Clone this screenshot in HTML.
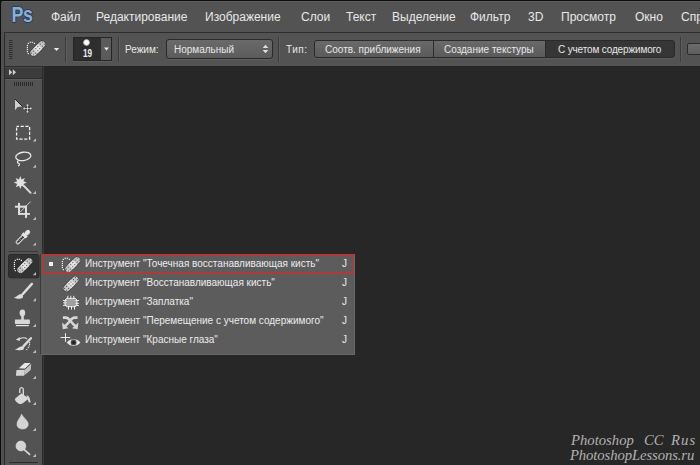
<!DOCTYPE html>
<html><head><meta charset="utf-8">
<style>
*{margin:0;padding:0;box-sizing:border-box}
html,body{width:700px;height:465px;overflow:hidden;background:#272727;font-family:"Liberation Sans",sans-serif;position:relative}
.a{position:absolute}
.t{position:absolute;white-space:pre;line-height:1;color:#e6e6e6}
#frameL{left:0;top:0;width:1px;height:465px;background:#0c0c0c}
#frameT{left:0;top:0;width:700px;height:1px;background:#0c0c0c}
#menubar{left:1px;top:1px;width:699px;height:31px;background:#535353;border-top-left-radius:3px;border-top:1px solid #5f5f5f}
#lstrip{left:1px;top:32px;width:3px;height:433px;background:#505050}
#lline{left:4px;top:32px;width:1px;height:433px;background:#2b2b2b}
#optbar{left:5px;top:33px;width:695px;height:33px;background:#535353}
#optTop{left:4px;top:32px;width:696px;height:1px;background:#2d2d2d}
#optBot{left:4px;top:65px;width:696px;height:1px;background:#2d2d2d}
.mb{font-size:12px;color:#e8e8e8;top:11px}
.ob{font-size:10px;color:#e8e8e8}
.sep{position:absolute;top:37px;width:1px;height:25px;background:#3a3a3a;box-shadow:1px 0 0 #5e5e5e}
#tools{left:5px;top:66px;width:37px;height:399px;background:#535353}
#toolsR{left:42px;top:66px;width:2px;height:399px;background:#3a3a3a;border-left:1px solid #2c2c2c}
#thead{left:5px;top:66px;width:37px;height:13px;background:#3c3c3c;border-bottom:1px solid #2c2c2c;border-top:1px solid #2c2c2c;box-shadow:inset 0 1px 0 #474747,0 1px 0 #5e5e5e}
#menu{left:40px;top:254px;width:315px;height:101px;border-left:1px solid #3a3a3a;background:#5c5c5c;border-right:1px solid #666;border-bottom:1px solid #666}
.mi{font-size:10px;color:#ececec;left:85px}
.mj{font-size:10px;color:#ececec;left:342px}
#brushbox{left:73px;top:37px;width:39px;height:24px;background:#2e2e2e;border:1px solid #262626;box-shadow:0 1px 0 #5e5e5e}
#brushdd{left:101px;top:38px;width:10px;height:22px;background:#5b5b5b}
#dd{left:166px;top:39px;width:107px;height:20px;border:1px solid #2a2a2a;border-radius:3px;background:linear-gradient(#6a6a6a,#5c5c5c);box-shadow:0 1px 0 #5e5e5e}
#seg{left:314px;top:40px;width:361px;height:18px;border:1px solid #2a2a2a;border-radius:3px;background:#2a2a2a;overflow:hidden;box-shadow:0 1px 0 #5e5e5e}
.sb{position:absolute;top:0;height:16px;background:linear-gradient(#6a6a6a,#5a5a5a)}
#chk{left:687px;top:43px;width:16px;height:12px;border:1px solid #2c2c2c;border-radius:2px;background:linear-gradient(#6c6c6c,#5e5e5e)}
.wm{font-family:"Liberation Serif",serif;font-style:italic;font-size:14px;color:#b2b2b2;transform-origin:0 0;transform:scaleX(1.05)}
</style></head><body>
<div class="a" id="menubar"></div>
<div class="a" id="frameT"></div>
<div class="a" id="frameL"></div>
<div class="a" id="lstrip"></div>
<div class="a" id="lline"></div>
<div class="a" id="optbar"></div>
<div class="a" id="optTop"></div>
<div class="sep" style="left:65px"></div>
<div class="sep" style="left:118px"></div>
<div class="sep" style="left:278px"></div>
<div class="sep" style="left:680px"></div>
<div class="a" id="brushbox"></div>
<div class="a" id="brushdd"></div>
<div class="a" id="dd"></div>
<div class="a" id="seg"><div class="sb" style="left:0;width:118px"></div><div class="sb" style="left:119px;width:111px"></div><div class="sb" style="left:231px;width:130px;background:#363636"></div></div>
<div class="a" id="chk"></div>

<div class="a" id="tools"></div>
<div class="a" id="toolsR"></div>
<div class="a" id="thead"></div>

<div class="a" id="menu"></div>

<svg class="a" style="left:0;top:0" width="700" height="465" viewBox="0 0 700 465"><rect x="27.7" y="53.0" width="1.2" height="1.2" fill="#f0f0f0"/><rect x="26.799999999999997" y="51.0" width="1.2" height="1.2" fill="#f0f0f0"/><rect x="26.799999999999997" y="48.9" width="1.2" height="1.2" fill="#f0f0f0"/><rect x="26.799999999999997" y="46.9" width="1.2" height="1.2" fill="#f0f0f0"/><rect x="26.799999999999997" y="44.9" width="1.2" height="1.2" fill="#f0f0f0"/><rect x="27.7" y="42.8" width="1.2" height="1.2" fill="#f0f0f0"/><rect x="29.7" y="41.699999999999996" width="1.2" height="1.2" fill="#f0f0f0"/><rect x="31.699999999999996" y="41.699999999999996" width="1.2" height="1.2" fill="#f0f0f0"/><rect x="33.8" y="42.8" width="1.2" height="1.2" fill="#f0f0f0"/><g transform="translate(37.8,48.6) rotate(-45)"><rect x="-9.75" y="-3.7" width="19.5" height="7.4" rx="3.7" fill="#262626" opacity=".8"/><rect x="-9.25" y="-3.2" width="18.5" height="6.4" rx="3.2" fill="#c6c6c6"/><rect x="-3.1" y="-3.2" width="6.2" height="6.4" fill="#e6e6e6"/><circle cx="-7.699999999999999" cy="-1.4" r="0.55" fill="#484848"/><circle cx="-4.9" cy="-1.4" r="0.55" fill="#484848"/><circle cx="-7.699999999999999" cy="1.4" r="0.55" fill="#484848"/><circle cx="-4.9" cy="1.4" r="0.55" fill="#484848"/><circle cx="-1.4" cy="-1.4" r="0.55" fill="#484848"/><circle cx="1.4" cy="-1.4" r="0.55" fill="#484848"/><circle cx="-1.4" cy="1.4" r="0.55" fill="#484848"/><circle cx="1.4" cy="1.4" r="0.55" fill="#484848"/><circle cx="4.9" cy="-1.4" r="0.55" fill="#484848"/><circle cx="7.699999999999999" cy="-1.4" r="0.55" fill="#484848"/><circle cx="4.9" cy="1.4" r="0.55" fill="#484848"/><circle cx="7.699999999999999" cy="1.4" r="0.55" fill="#484848"/></g><path d="M53.8 48 L59.2 48 L56.5 51Z" fill="#ececec"/><rect x="9" y="40" width="3.5" height="1" fill="#2e2e2e"/><rect x="9" y="42" width="3.5" height="1" fill="#2e2e2e"/><rect x="9" y="44" width="3.5" height="1" fill="#2e2e2e"/><rect x="9" y="46" width="3.5" height="1" fill="#2e2e2e"/><rect x="9" y="48" width="3.5" height="1" fill="#2e2e2e"/><rect x="9" y="50" width="3.5" height="1" fill="#2e2e2e"/><rect x="9" y="52" width="3.5" height="1" fill="#2e2e2e"/><rect x="9" y="54" width="3.5" height="1" fill="#2e2e2e"/><rect x="9" y="56" width="3.5" height="1" fill="#2e2e2e"/><rect x="9" y="58" width="3.5" height="1" fill="#2e2e2e"/><path d="M9 69.2 L12.2 72.2 L9 75.2Z M12.8 69.2 L16 72.2 L12.8 75.2Z" fill="#cfcfcf"/><rect x="14" y="82" width="1" height="4" fill="#2a2a2a"/><rect x="16" y="82" width="1" height="4" fill="#2a2a2a"/><rect x="18" y="82" width="1" height="4" fill="#2a2a2a"/><rect x="20" y="82" width="1" height="4" fill="#2a2a2a"/><rect x="22" y="82" width="1" height="4" fill="#2a2a2a"/><rect x="24" y="82" width="1" height="4" fill="#2a2a2a"/><rect x="26" y="82" width="1" height="4" fill="#2a2a2a"/><rect x="28" y="82" width="1" height="4" fill="#2a2a2a"/><rect x="30" y="82" width="1" height="4" fill="#2a2a2a"/><rect x="32" y="82" width="1" height="4" fill="#2a2a2a"/><path d="M15 99.4 L22.3 106.6 L17.6 106.9 L15 110.2Z" fill="#cfcfcf"/><path d="M15 99 L22.5 106.5" stroke="#1e1e1e" stroke-width="0.9" fill="none"/><g fill="#e6e6e6" stroke="#1f1f1f" stroke-width="0.4"><path d="M27.5 103.8 L29.4 105.8 L28.1 105.8 L28.1 107.9 L30.2 107.9 L30.2 106.6 L32.2 108.5 L30.2 110.4 L30.2 109.1 L28.1 109.1 L28.1 111.2 L29.4 111.2 L27.5 113.2 L25.6 111.2 L26.9 111.2 L26.9 109.1 L24.8 109.1 L24.8 110.4 L22.8 108.5 L24.8 106.6 L24.8 107.9 L26.9 107.9 L26.9 105.8 L25.6 105.8Z"/></g><rect x="16.6" y="126.4" width="13" height="12.8" fill="none" stroke="#f2f2f2" stroke-width="1.3" stroke-dasharray="3.2 1.6" stroke-dashoffset="0.8"/><path d="M36.0 138.3 L36.0 141.5 L32.8 141.5Z" fill="#bcbcbc"/><ellipse cx="23.3" cy="156.4" rx="7.6" ry="4.2" transform="rotate(-8 23.3 156.4)" fill="none" stroke="#e8e8e8" stroke-width="1.3"/><path d="M18.5 160.4 C16.5 161.8 17.5 163 19 163.5 C20 164 19.2 165.5 18 166" fill="none" stroke="#e8e8e8" stroke-width="1.2"/><path d="M36.0 164.5 L36.0 167.7 L32.8 167.7Z" fill="#bcbcbc"/><path d="M20.30 176.10 L21.60 179.46 L24.90 178.00 L23.44 181.30 L26.80 182.60 L23.44 183.90 L24.90 187.20 L21.60 185.74 L20.30 189.10 L19.00 185.74 L15.70 187.20 L17.16 183.90 L13.80 182.60 L17.16 181.30 L15.70 178.00 L19.00 179.46Z" fill="#e2e2e2"/><path d="M24 186 L30.6 192.8" stroke="#dcdcdc" stroke-width="1.9" stroke-linecap="round"/><path d="M36.0 190.7 L36.0 193.89999999999998 L32.8 193.89999999999998Z" fill="#bcbcbc"/><g fill="#dedede"><rect x="18" y="202.9" width="2" height="12"/><rect x="14.9" y="205.7" width="12.1" height="2"/><rect x="25" y="205.7" width="2" height="12.2"/><rect x="18" y="213" width="11.9" height="1.9"/></g><path d="M20.3 212 L30.6 201.6" stroke="#d8d8d8" stroke-width="0.9"/><path d="M36.0 216.8 L36.0 220.0 L32.8 220.0Z" fill="#bcbcbc"/><g transform="translate(23.5 236.5) rotate(-45)"><rect x="-9.5" y="-1.6" width="10" height="3.2" rx="1" fill="#303030" stroke="#e8e8e8" stroke-width="1"/><path d="M-8 -1 V1 M-6 -1 V1 M-4 -1 V1 M-2 -1 V1" stroke="#c8c8c8" stroke-width="0.7"/><rect x="0" y="-3" width="3" height="6" fill="#e4e4e4"/><rect x="2.5" y="-2.2" width="6" height="4.4" rx="2.2" fill="#e4e4e4"/></g><path d="M36.0 242.4 L36.0 245.6 L32.8 245.6Z" fill="#bcbcbc"/><rect x="8.5" y="251" width="29.5" height="1" fill="#383838"/><rect x="8.5" y="254.5" width="30.5" height="23.3" rx="2" fill="#323232" stroke="#2a2a2a" stroke-width="1"/><rect x="14.700000000000001" y="270.0" width="1.2" height="1.2" fill="#f0f0f0"/><rect x="13.8" y="268.0" width="1.2" height="1.2" fill="#f0f0f0"/><rect x="13.8" y="265.9" width="1.2" height="1.2" fill="#f0f0f0"/><rect x="13.8" y="263.9" width="1.2" height="1.2" fill="#f0f0f0"/><rect x="13.8" y="261.9" width="1.2" height="1.2" fill="#f0f0f0"/><rect x="14.700000000000001" y="259.79999999999995" width="1.2" height="1.2" fill="#f0f0f0"/><rect x="16.7" y="258.7" width="1.2" height="1.2" fill="#f0f0f0"/><rect x="18.7" y="258.7" width="1.2" height="1.2" fill="#f0f0f0"/><rect x="20.799999999999997" y="259.79999999999995" width="1.2" height="1.2" fill="#f0f0f0"/><g transform="translate(24.8,265.6) rotate(-45)"><rect x="-9.75" y="-3.7" width="19.5" height="7.4" rx="3.7" fill="#262626" opacity=".8"/><rect x="-9.25" y="-3.2" width="18.5" height="6.4" rx="3.2" fill="#c6c6c6"/><rect x="-3.1" y="-3.2" width="6.2" height="6.4" fill="#e6e6e6"/><circle cx="-7.699999999999999" cy="-1.4" r="0.55" fill="#484848"/><circle cx="-4.9" cy="-1.4" r="0.55" fill="#484848"/><circle cx="-7.699999999999999" cy="1.4" r="0.55" fill="#484848"/><circle cx="-4.9" cy="1.4" r="0.55" fill="#484848"/><circle cx="-1.4" cy="-1.4" r="0.55" fill="#484848"/><circle cx="1.4" cy="-1.4" r="0.55" fill="#484848"/><circle cx="-1.4" cy="1.4" r="0.55" fill="#484848"/><circle cx="1.4" cy="1.4" r="0.55" fill="#484848"/><circle cx="4.9" cy="-1.4" r="0.55" fill="#484848"/><circle cx="7.699999999999999" cy="-1.4" r="0.55" fill="#484848"/><circle cx="4.9" cy="1.4" r="0.55" fill="#484848"/><circle cx="7.699999999999999" cy="1.4" r="0.55" fill="#484848"/></g><path d="M36.0 272 L36.0 275.2 L32.8 275.2Z" fill="#bcbcbc"/><path d="M31.9 283.9 L22.6 294.2" stroke="#dedede" stroke-width="2.4" stroke-linecap="round"/><path d="M13.9 297.4 C17 297 18.5 294 21 294 C23 294.2 23.6 296.5 22.5 298 C20 299.3 16 298.6 13.9 297.4Z" fill="#dcdcdc"/><path d="M36.0 298 L36.0 301.2 L32.8 301.2Z" fill="#bcbcbc"/><ellipse cx="22.4" cy="313" rx="2.8" ry="3.4" fill="#dadada"/><rect x="21.2" y="314" width="2.6" height="6" fill="#d5d5d5"/><rect x="14.9" y="319.5" width="15" height="4.4" rx=".6" fill="#d8d8d8"/><rect x="15.9" y="324.9" width="12.9" height="1.3" fill="#e8e8e8"/><path d="M36.0 323.8 L36.0 327.0 L32.8 327.0Z" fill="#bcbcbc"/><path d="M15.9 339.8 L19.8 337 L19.8 340.9Z" fill="#dcdcdc"/><path d="M19.5 338.8 C22 337.5 25.5 337.2 27 339" fill="none" stroke="#dcdcdc" stroke-width="1.2"/><path d="M30.9 338.2 L23.4 346.4" stroke="#d8d8d8" stroke-width="2.4" stroke-linecap="round"/><path d="M14.9 349.3 C18 348.8 19.5 346.2 22 346.2 C24 346.4 24.5 348.5 23.5 349.6 C21 350.8 17 350.4 14.9 349.3Z" fill="#dcdcdc"/><rect x="29.05" y="342.05" width="1.1" height="1.1" fill="#f2f2f2"/><rect x="29.05" y="343.75" width="1.1" height="1.1" fill="#f2f2f2"/><rect x="28.55" y="345.45" width="1.1" height="1.1" fill="#f2f2f2"/><rect x="27.75" y="347.05" width="1.1" height="1.1" fill="#f2f2f2"/><rect x="26.25" y="349.05" width="1.1" height="1.1" fill="#f2f2f2"/><path d="M36.0 349.7 L36.0 352.9 L32.8 352.9Z" fill="#bcbcbc"/><path d="M18.3 368.8 L24.5 362.9 L31.2 362.9 L25 369.1Z" fill="#e6e6e6"/><path d="M16.5 369.9 L25 369.6 L24 375.8 L15.9 375.8Z" fill="#d4d4d4"/><path d="M25 369.4 L31.2 363.7 L30.7 370.1 L24 375.6Z" fill="#c2c2c2"/><path d="M18.3 368.8 L25 369.1 L31.2 362.9" stroke="#2e2e2e" stroke-width=".7" fill="none"/><path d="M36.0 375.8 L36.0 379.0 L32.8 379.0Z" fill="#bcbcbc"/><path d="M19.8 393 L19.8 389.5 C19.8 387 23.3 387 23.3 389.5 L23.3 395" fill="none" stroke="#e0e0e0" stroke-width="1.3"/><path d="M15.2 398.5 L21.5 393.2 L27.8 397.8 C28.2 398.3 28 399 27.6 399.4 L22.5 403.6 C21.5 404.2 20 404.2 18.8 403.7 C16.8 402.8 15.3 401 15 399.5Z" fill="#d8d8d8"/><path d="M26.5 395.3 C28.5 395.5 29.5 397 29.8 399 L30.7 402.3 L28.8 402.6 Z" fill="#dadada"/><path d="M36.0 401.7 L36.0 404.9 L32.8 404.9Z" fill="#bcbcbc"/><path d="M21.6 414.2 C22.5 417 28.2 420.5 28.2 424.3 C28.2 427.3 25.6 429 22.5 429 C19.4 429 17 427.3 17 424.3 C17 420.5 21 417 21.6 414.2Z" fill="#d4d4d4" stroke="#e8e8e8" stroke-width=".6"/><path d="M36.0 427.7 L36.0 430.9 L32.8 430.9Z" fill="#bcbcbc"/><circle cx="20.9" cy="446" r="4.9" fill="#d4d4d4" stroke="#e6e6e6" stroke-width=".6"/><path d="M24.5 449.8 L29.6 454.4" stroke="#dadada" stroke-width="1.6" stroke-linecap="round"/><path d="M36.0 453.7 L36.0 456.9 L32.8 456.9Z" fill="#bcbcbc"/><rect x="9" y="462" width="29" height="1" fill="#2e2e2e"/><rect x="49" y="262" width="4" height="4" fill="#f4f4f4"/><rect x="62.699999999999996" y="269.0" width="1.2" height="1.2" fill="#f0f0f0"/><rect x="61.8" y="267.0" width="1.2" height="1.2" fill="#f0f0f0"/><rect x="61.8" y="264.9" width="1.2" height="1.2" fill="#f0f0f0"/><rect x="61.8" y="262.9" width="1.2" height="1.2" fill="#f0f0f0"/><rect x="61.8" y="260.9" width="1.2" height="1.2" fill="#f0f0f0"/><rect x="62.699999999999996" y="258.79999999999995" width="1.2" height="1.2" fill="#f0f0f0"/><rect x="64.7" y="257.7" width="1.2" height="1.2" fill="#f0f0f0"/><rect x="66.7" y="257.7" width="1.2" height="1.2" fill="#f0f0f0"/><rect x="68.80000000000001" y="258.79999999999995" width="1.2" height="1.2" fill="#f0f0f0"/><g transform="translate(72.8,264.6) rotate(-45)"><rect x="-9.75" y="-3.7" width="19.5" height="7.4" rx="3.7" fill="#262626" opacity=".8"/><rect x="-9.25" y="-3.2" width="18.5" height="6.4" rx="3.2" fill="#c6c6c6"/><rect x="-3.1" y="-3.2" width="6.2" height="6.4" fill="#e6e6e6"/><circle cx="-7.699999999999999" cy="-1.4" r="0.55" fill="#484848"/><circle cx="-4.9" cy="-1.4" r="0.55" fill="#484848"/><circle cx="-7.699999999999999" cy="1.4" r="0.55" fill="#484848"/><circle cx="-4.9" cy="1.4" r="0.55" fill="#484848"/><circle cx="-1.4" cy="-1.4" r="0.55" fill="#484848"/><circle cx="1.4" cy="-1.4" r="0.55" fill="#484848"/><circle cx="-1.4" cy="1.4" r="0.55" fill="#484848"/><circle cx="1.4" cy="1.4" r="0.55" fill="#484848"/><circle cx="4.9" cy="-1.4" r="0.55" fill="#484848"/><circle cx="7.699999999999999" cy="-1.4" r="0.55" fill="#484848"/><circle cx="4.9" cy="1.4" r="0.55" fill="#484848"/><circle cx="7.699999999999999" cy="1.4" r="0.55" fill="#484848"/></g><g transform="translate(71,284) rotate(-45)"><rect x="-9.75" y="-3.7" width="19.5" height="7.4" rx="3.7" fill="#262626" opacity=".8"/><rect x="-9.25" y="-3.2" width="18.5" height="6.4" rx="3.2" fill="#c6c6c6"/><rect x="-3.1" y="-3.2" width="6.2" height="6.4" fill="#e6e6e6"/><circle cx="-7.699999999999999" cy="-1.4" r="0.55" fill="#484848"/><circle cx="-4.9" cy="-1.4" r="0.55" fill="#484848"/><circle cx="-7.699999999999999" cy="1.4" r="0.55" fill="#484848"/><circle cx="-4.9" cy="1.4" r="0.55" fill="#484848"/><circle cx="-1.4" cy="-1.4" r="0.55" fill="#484848"/><circle cx="1.4" cy="-1.4" r="0.55" fill="#484848"/><circle cx="-1.4" cy="1.4" r="0.55" fill="#484848"/><circle cx="1.4" cy="1.4" r="0.55" fill="#484848"/><circle cx="4.9" cy="-1.4" r="0.55" fill="#484848"/><circle cx="7.699999999999999" cy="-1.4" r="0.55" fill="#484848"/><circle cx="4.9" cy="1.4" r="0.55" fill="#484848"/><circle cx="7.699999999999999" cy="1.4" r="0.55" fill="#484848"/></g><ellipse cx="71" cy="302.6" rx="8.2" ry="6.2" fill="#2a2a2a" opacity=".45"/><g><path d="M66.5 298.3 L75.5 298.3 L77 300.3 L77 305 L75.5 306.8 L66.5 306.8 L65 305 L65 300.3Z" fill="#a0a0a0" stroke="#f0f0f0" stroke-width="1"/><g stroke="#f2f2f2" stroke-width="1"><path d="M67.8 295.8 V299 M70.8 295.8 V299 M73.8 295.8 V299"/><path d="M68.5 306 V309.6 M71.5 306 V309.6 M74.5 306 V309.6"/><path d="M63 300.5 H66.5 M63 302.8 H66.5 M63 305.3 H66.5"/><path d="M75.5 300.5 H79 M75.5 303.3 H79 M75.5 305.5 H79"/></g></g><g fill="none" stroke="#d6d6d6" stroke-width="2.6"><path d="M62.9 317.6 L65.8 317.6 C69.5 317.6 71 323 75.2 325.8"/><path d="M77.5 317.6 L74.6 317.6 C70.9 317.6 69.4 323 65.2 325.8"/></g><path d="M62 322.6 L68.4 328.2 L62.8 329.2Z M78.4 322.6 L72 328.2 L77.6 329.2Z" fill="#d6d6d6"/><path d="M60.7 337.5 H70.2 M65.5 333.2 V341.8" stroke="#ececec" stroke-width="1"/><path d="M66.8 342.6 C70 338.2 77.2 338.2 80.4 342.6 C77.2 347 70 347 66.8 342.6Z" fill="#e6e6e6"/><circle cx="73.6" cy="342.4" r="2.9" fill="#4a4a4a"/><circle cx="73.6" cy="342.4" r="1.5" fill="#1e1e1e"/></svg>

<div class="a" style="left:42px;top:254px;width:312px;height:20px;border:2px solid #ac3c3c"></div>

<!-- Ps logo -->
<svg class="a" style="left:0;top:0" width="40" height="30"><text x="0" y="0" transform="translate(11.4 21.8) scale(0.85 1.03)" font-family="Liberation Sans" font-weight="bold" font-size="21" fill="#88b0d8" stroke="#203850" stroke-width="1.6" paint-order="stroke" letter-spacing="-0.4">Ps</text></svg>
<!-- menubar -->
<div class="t mb" style="left:51px">Файл</div>
<div class="t mb" style="left:96px">Редактирование</div>
<div class="t mb" style="left:205px">Изображение</div>
<div class="t mb" style="left:301px">Слои</div>
<div class="t mb" style="left:346px">Текст</div>
<div class="t mb" style="left:392px">Выделение</div>
<div class="t mb" style="left:470px">Фильтр</div>
<div class="t mb" style="left:528px">3D</div>
<div class="t mb" style="left:561px">Просмотр</div>
<div class="t mb" style="left:635px">Окно</div>
<div class="t mb" style="left:681px">Справка</div>

<!-- options bar -->
<div class="t ob" style="left:125px;top:45px">Режим:</div>
<div class="t ob" style="left:174px;top:45px">Нормальный</div>
<div class="t ob" style="left:286px;top:45px;letter-spacing:0.5px">Тип:</div>
<div class="t ob" style="left:325px;top:45px">Соотв. приближения</div>
<div class="t ob" style="left:444px;top:45px">Создание текстуры</div>
<div class="t ob" style="left:558px;top:45px;letter-spacing:-0.15px">С учетом содержимого</div>
<div class="t" style="left:83px;top:49px;font-size:10px;font-weight:bold;color:#eeeeee;transform:scaleX(0.82);transform-origin:0 0">19</div>
<div class="a" style="left:83px;top:39px;width:7px;height:7px;border-radius:50%;background:radial-gradient(circle,#fff 0%,#fff 40%,rgba(230,230,230,.7) 60%,rgba(200,200,200,0) 78%)"></div>
<svg class="a" style="left:0;top:0" width="700" height="66"><path d="M104 47.5 L109 47.5 L106.5 50.5Z" fill="#ececec"/><path d="M265.5 44.8 L268.3 48 L262.7 48Z M262.7 50 L268.3 50 L265.5 53.2Z" fill="#e0e0e0"/></svg>

<!-- flyout menu -->
<div class="t mi" style="top:259px">Инструмент "Точечная восстанавливающая кисть"</div>
<div class="t mi" style="top:278px">Инструмент "Восстанавливающая кисть"</div>
<div class="t mi" style="top:297px">Инструмент "Заплатка"</div>
<div class="t mi" style="top:316px">Инструмент "Перемещение с учетом содержимого"</div>
<div class="t mi" style="top:335px">Инструмент "Красные глаза"</div>
<div class="t mj" style="top:259px">J</div>
<div class="t mj" style="top:278px">J</div>
<div class="t mj" style="top:297px">J</div>
<div class="t mj" style="top:316px">J</div>
<div class="t mj" style="top:335px">J</div>

<!-- watermark -->
<div class="t wm" style="left:571px;top:434px">Photoshop</div>
<div class="t wm" style="left:644px;top:434px">CC</div>
<div class="t wm" style="left:671px;top:434px;letter-spacing:1px">Rus</div>
<div class="t wm" style="left:570px;top:449px;letter-spacing:-0.1px">PhotoshopLessons.ru</div>
</body></html>
